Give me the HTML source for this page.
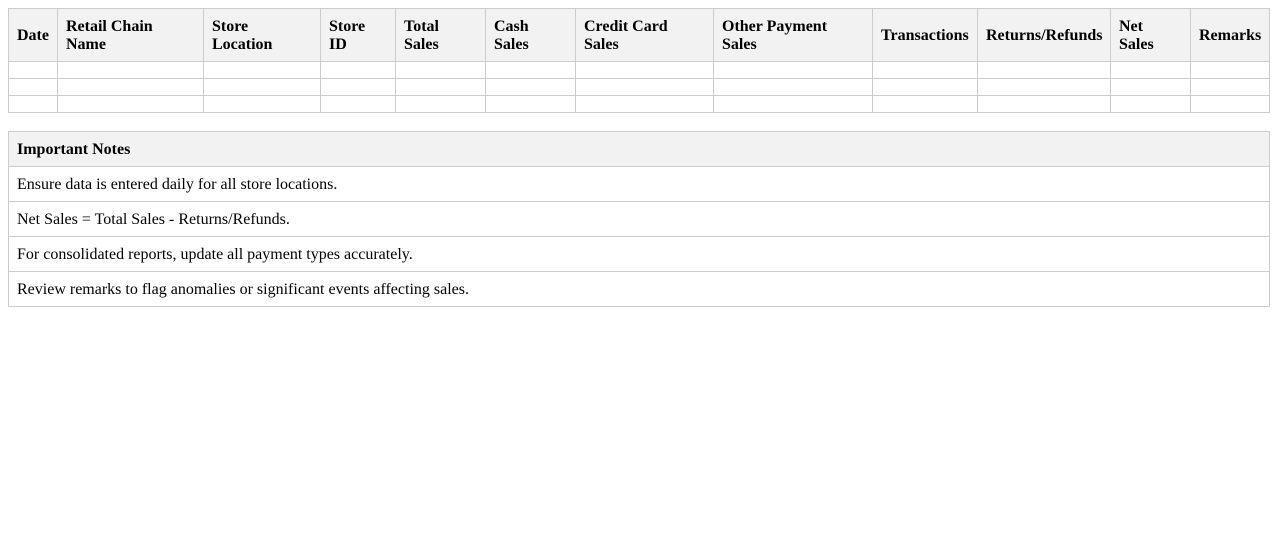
<!DOCTYPE html>
<html><head><style>
body{margin:8px;font-family:"Liberation Serif",serif;font-size:16px;line-height:18px;color:#000;background:#fff}
table{border-collapse:collapse;width:1262px;table-layout:fixed}
td,th{border:1px solid #ccc;padding:9px 8px 7px;text-align:left;vertical-align:middle}
th{background:#f2f2f2;font-weight:bold;white-space:nowrap}
.n{margin-top:18px}
</style></head><body>
<table style="width:1261px">
<colgroup><col style="width:49px"><col style="width:146px"><col style="width:117px"><col style="width:75px"><col style="width:90px"><col style="width:90px"><col style="width:138px"><col style="width:159px"><col style="width:105px"><col style="width:133px"><col style="width:80px"><col style="width:79px"></colgroup>
<tr><th>Date</th><th>Retail Chain<br>Name</th><th>Store<br>Location</th><th>Store<br>ID</th><th>Total<br>Sales</th><th>Cash<br>Sales</th><th>Credit Card<br>Sales</th><th>Other Payment<br>Sales</th><th>Transactions</th><th>Returns/Refunds</th><th>Net<br>Sales</th><th>Remarks</th></tr>
<tr><td></td><td></td><td></td><td></td><td></td><td></td><td></td><td></td><td></td><td></td><td></td><td></td></tr>
<tr><td></td><td></td><td></td><td></td><td></td><td></td><td></td><td></td><td></td><td></td><td></td><td></td></tr>
<tr><td></td><td></td><td></td><td></td><td></td><td></td><td></td><td></td><td></td><td></td><td></td><td></td></tr>
</table>
<table class="n">
<tr><th>Important Notes</th></tr>
<tr><td>Ensure data is entered daily for all store locations.</td></tr>
<tr><td>Net Sales = Total Sales - Returns/Refunds.</td></tr>
<tr><td>For consolidated reports, update all payment types accurately.</td></tr>
<tr><td>Review remarks to flag anomalies or significant events affecting sales.</td></tr>
</table>
</body></html>
